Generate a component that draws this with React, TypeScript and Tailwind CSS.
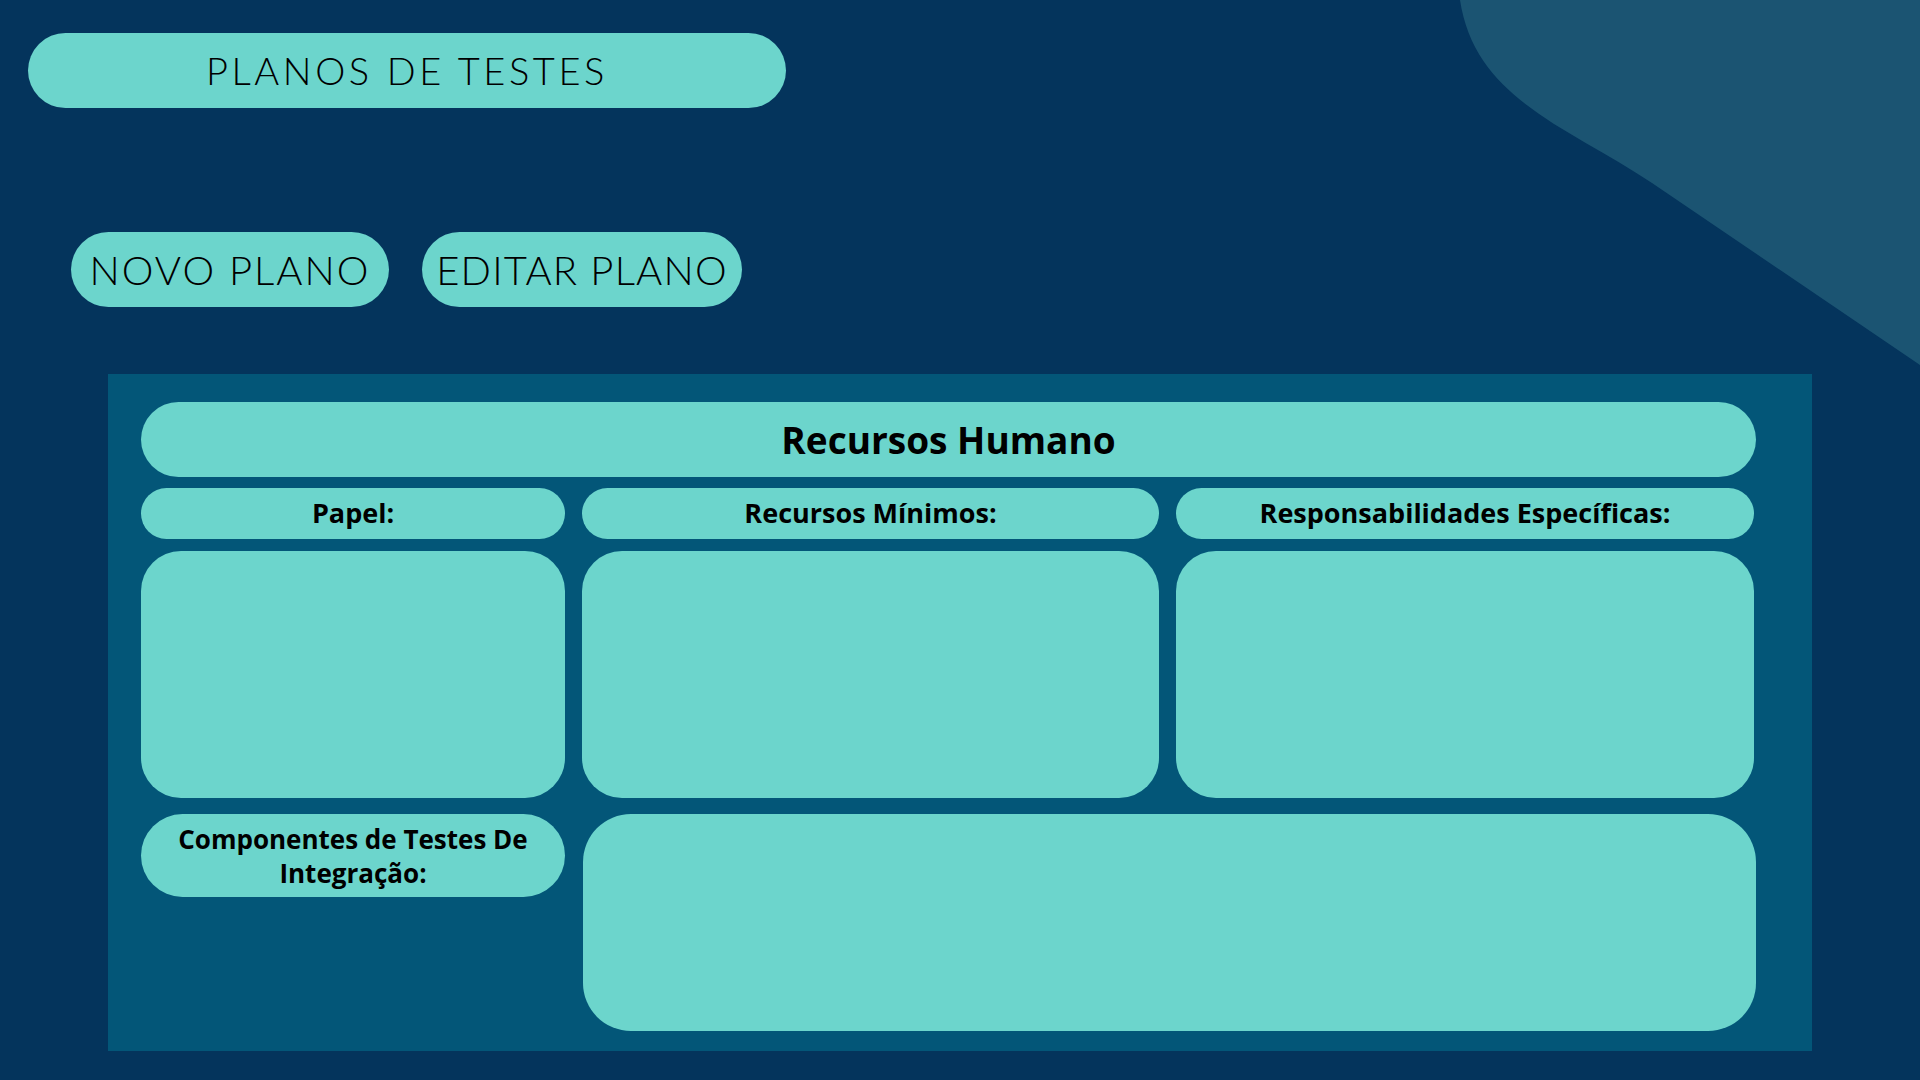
import React from "react";

const Cell = ({ className = "" }: { className?: string }) => (
  <div className={`bg-[#6cd5cc] ${className}`} />
);

export default function App() {
  const cols = ["Papel:", "Recursos Mínimos:", "Responsabilidades Específicas:"];

  return (
    <div className="relative w-[1920px] h-[1080px] overflow-hidden bg-[#04345c]">
      {/* decorative wave top right */}
      <svg
        className="absolute top-0 right-0"
        width="460"
        height="365"
        viewBox="0 0 460 365"
      >
        <path d="M0 0 C15 100 111 128 192 183 L460 365 L460 0 Z" fill="#1b5472" />
      </svg>

      <div className="relative flex flex-col pl-[28px] pt-[33px]">
        <div
          className="w-[758px] h-[75px] rounded-full bg-[#6cd5cc] flex items-center justify-center text-black text-[38px] font-light tracking-[0.095em] whitespace-nowrap"
          style={{ fontFamily: "Lato, 'Open Sans', sans-serif" }}
        >
          PLANOS DE TESTES
        </div>

        <div
          className="flex gap-[33px] ml-[43px] mt-[124px]"
          style={{ fontFamily: "Lato, 'Open Sans', sans-serif" }}
        >
          <button className="w-[318px] h-[75px] rounded-full bg-[#6cd5cc] flex items-center justify-center text-black text-[40px] font-light tracking-[0.05em] whitespace-nowrap">
            NOVO PLANO
          </button>
          <button className="w-[320px] h-[75px] rounded-full bg-[#6cd5cc] flex items-center justify-center text-black text-[40px] font-light tracking-[0.03em] whitespace-nowrap">
            EDITAR PLANO
          </button>
        </div>

        <div
          className="ml-[80px] mt-[67px] w-[1704px] h-[677px] bg-[#035678] pl-[33px] pr-[56px] pt-[28px] text-black font-bold"
          style={{ fontFamily: "'Open Sans', 'Liberation Sans', sans-serif" }}
        >
          <div className="h-[75px] rounded-full bg-[#6cd5cc] flex items-center justify-center text-[37px]">
            Recursos Humano
          </div>

          <div className="grid grid-cols-[424px_577px_578px] gap-x-[17px] mt-[11px]">
            {cols.map((c) => (
              <div
                key={c}
                className="h-[51px] rounded-[26px] bg-[#6cd5cc] flex items-center justify-center text-[27px] whitespace-nowrap"
              >
                {c}
              </div>
            ))}
          </div>

          <div className="grid grid-cols-[424px_577px_578px] gap-x-[17px] mt-[12px]">
            <Cell className="h-[247px] rounded-[40px]" />
            <Cell className="h-[247px] rounded-[40px]" />
            <Cell className="h-[247px] rounded-[40px]" />
          </div>

          <div className="flex gap-x-[18px] mt-[16px]">
            <div className="w-[424px] h-[83px] shrink-0 rounded-[42px] bg-[#6cd5cc] flex items-center justify-center text-center text-[26px] leading-[34px]">
              Componentes de Testes De
              <br />
              Integração:
            </div>
            <Cell className="w-[1173px] h-[217px] rounded-[48px]" />
          </div>
        </div>
      </div>
    </div>
  );
}
